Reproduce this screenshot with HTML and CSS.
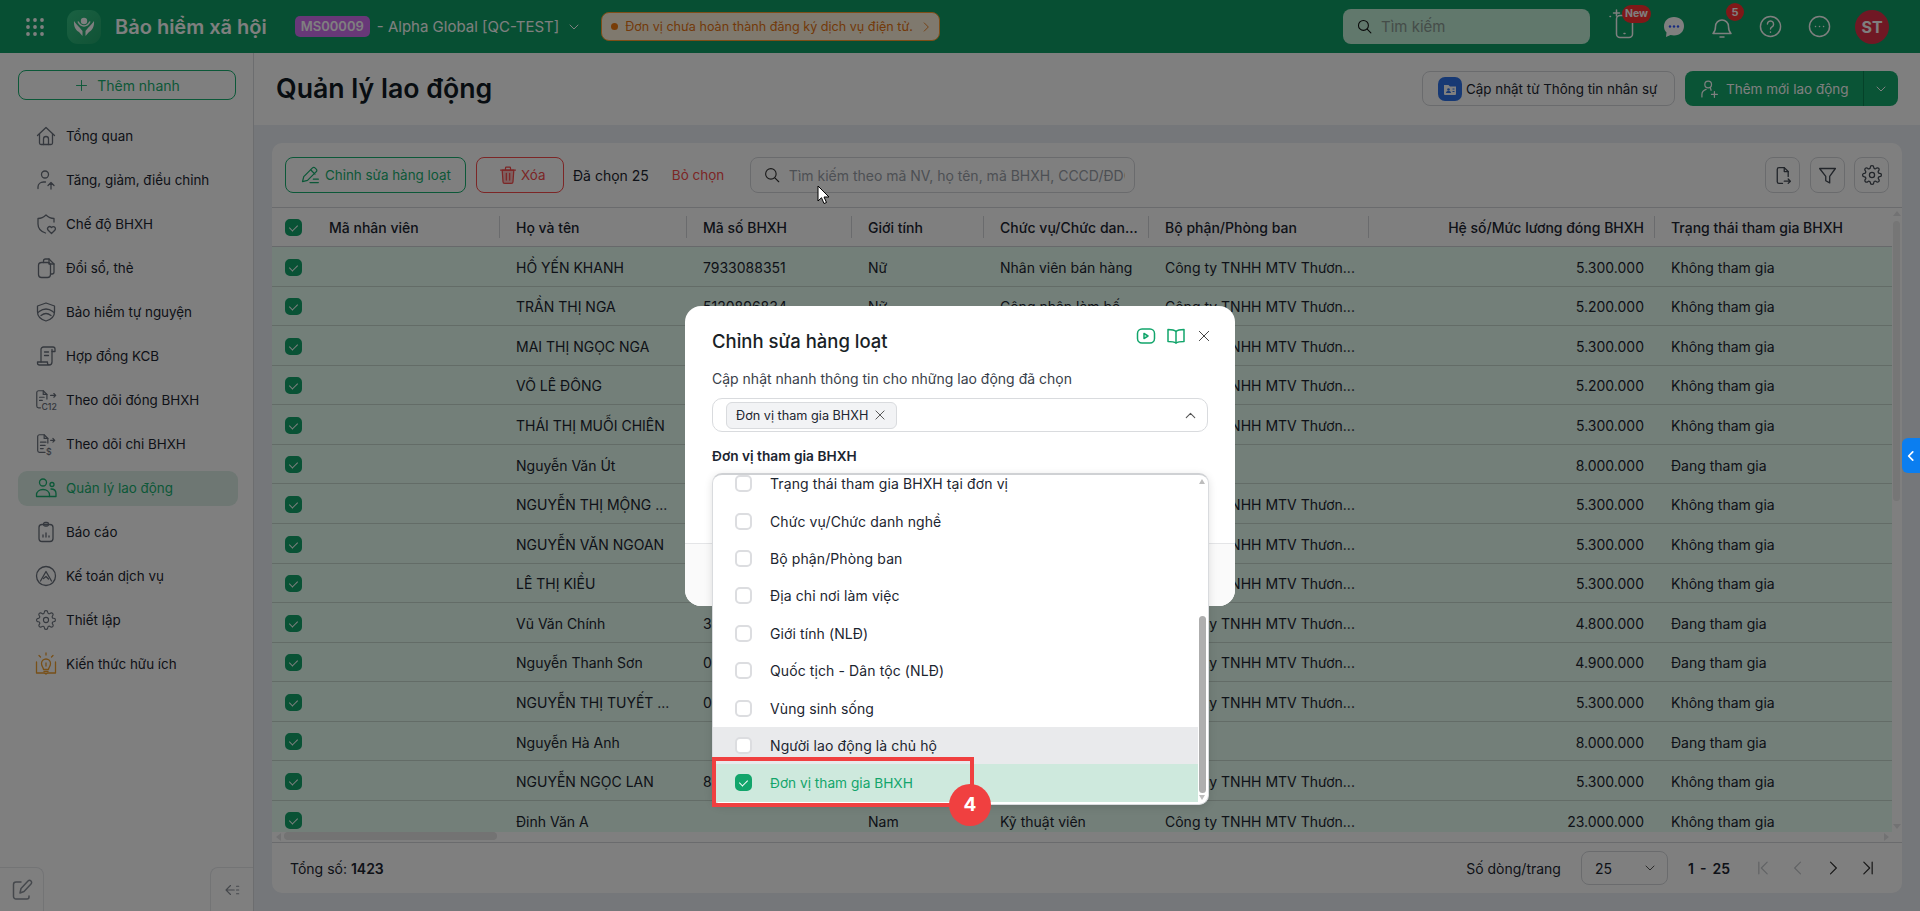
FILE: index.html
```html
<!DOCTYPE html>
<html lang="vi">
<head>
    <meta charset="UTF-8">
    <meta name="viewport" content="width=device-width, initial-scale=1.0">
    <title>Bảo hiểm xã hội - Quản lý lao động</title>
    <link rel="stylesheet" href="styles.css">
</head>
<body>
    <!-- icon sprite -->
    <svg class="sprite" xmlns="http://www.w3.org/2000/svg">
        <symbol id="i-home" viewBox="0 0 24 24"><path d="M3.5 11.5L12 3.5l8.500 8"/><path d="M5.500 10v9a1.500 1.500 0 0 0 1.500 1.500h10a1.500 1.500 0 0 0 1.500-1.500v-9"/><path d="M9.500 20.500V15a2.500 2.500 0 0 1 5 0v5.500"/></symbol>
        <symbol id="i-user-up" viewBox="0 0 24 24"><circle cx="11" cy="6.500" r="3.500"/><path d="M4 20.500v-1.500c0-3 2.500-5 5.500-5h2"/><path d="M17 21v-6.500M14 17.500l3-3 3 3"/></symbol>
        <symbol id="i-shield-heart" viewBox="0 0 24 24"><path d="M20 10V6.500c-3 0-5.500-1-8-3.500-2.500 2.500-5 3.500-8 3.500V12c0 4.500 3 7.500 7.500 9"/><path d="M17.500 21.500l-3.300-3.200a2.100 2.100 0 0 1 3-3l.3.300.3-.300a2.100 2.100 0 0 1 3 3z"/></symbol>
        <symbol id="i-docs" viewBox="0 0 24 24"><path d="M9.500 6.500V5a2 2 0 0 1 2-2h3.500l5 5v8a2 2 0 0 1-2 2h-1.500"/><path d="M15 3v5h5"/><rect x="4.500" y="6.500" width="12" height="15" rx="3"/></symbol>
        <symbol id="i-shield" viewBox="0 0 24 24"><path d="M12 3l8.500 3v6c0 4.500-3.500 7.500-8.500 9-5-1.500-8.500-4.500-8.500-9V6z"/><path d="M4 12.500c2-1 3-3.500 8-3.500s6 2.500 8 3.500"/><path d="M7 15.500c2-1.500 3-2 5-2s3 .5 5 2"/></symbol>
        <symbol id="i-scroll" viewBox="0 0 24 24"><path d="M7 18V5.500A2.500 2.500 0 0 1 9.500 3H19a2 2 0 0 1 2 2v2.500h-3"/><path d="M18 5.500V18a3 3 0 0 1-3 3H5.500a2 2 0 0 1-2-2v-1h10v1a2 2 0 0 0 2 2"/><path d="M10.500 8h4M10.500 11.500h4"/></symbol>
        <symbol id="i-c12" viewBox="0 0 26 24"><path d="M7 20.500H5a2 2 0 0 1-2-2V4a2 2 0 0 1 2-2h5l4 4v5"/><path d="M10 2v4h4M6 9h5M6 12.500h3M18 7h5.500M21.500 5l2 2-2 2"/><text x="8" y="23" class="ico-text">C12</text></symbol>
        <symbol id="i-dollar" viewBox="0 0 26 24"><path d="M12 21H6a2 2 0 0 1-2-2V4a2 2 0 0 1 2-2h5l4 4v5"/><path d="M11 2v4h4M7 10h6M7 13.500h5M7 17h3M18 8h4.500M20.500 6l2 2-2 2"/><text x="13" y="23.500" class="ico-text">$</text></symbol>
        <symbol id="i-users" viewBox="0 0 24 24"><circle cx="9" cy="6.500" r="3.500"/><circle cx="18" cy="8.500" r="2"/><path d="M2.500 20.500v-1.500c0-3.500 3-5.500 6.500-5.500s6.500 2 6.500 5.500v1.500z"/><path d="M17 13c3 0 5 1.500 5 4.500v3h-6.500"/></symbol>
        <symbol id="i-report" viewBox="0 0 24 24"><rect x="5" y="4.500" width="14" height="17" rx="3"/><rect x="9.500" y="2.500" width="5" height="3.500" rx="1.500"/><path d="M9 17v-2M12 17v-4M15 17v-1"/></symbol>
        <symbol id="i-accounting" viewBox="0 0 24 24"><circle cx="12" cy="12" r="9.500"/><path d="M6.500 17l5.500-9.500 5.500 9.500"/><path d="M9.500 14.500l2.500-2 2.500 2.500"/></symbol>
        <symbol id="i-gear" viewBox="-2 -2 28 28"><circle cx="12" cy="12" r="3"/><path d="M19.400 15a1.650 1.650 0 0 0 .33 1.820l.06.06a2 2 0 0 1 0 2.830 2 2 0 0 1-2.830 0l-.06-.06a1.650 1.650 0 0 0-1.820-.33 1.650 1.650 0 0 0-1 1.510V21a2 2 0 0 1-2 2 2 2 0 0 1-2-2v-.09A1.650 1.650 0 0 0 9 19.400a1.650 1.650 0 0 0-1.820.33l-.06.06a2 2 0 0 1-2.830 0 2 2 0 0 1 0-2.830l.06-.06a1.650 1.650 0 0 0 .33-1.820 1.650 1.650 0 0 0-1.510-1H3a2 2 0 0 1-2-2 2 2 0 0 1 2-2h.09A1.650 1.650 0 0 0 4.600 9a1.650 1.650 0 0 0-.33-1.820l-.06-.06a2 2 0 0 1 0-2.830 2 2 0 0 1 2.830 0l.06.06a1.650 1.650 0 0 0 1.820.33H9a1.650 1.650 0 0 0 1-1.510V3a2 2 0 0 1 2-2 2 2 0 0 1 2 2v.09a1.650 1.650 0 0 0 1 1.510 1.650 1.650 0 0 0 1.820-.33l.06-.06a2 2 0 0 1 2.830 0 2 2 0 0 1 0 2.830l-.06.06a1.650 1.650 0 0 0-.33 1.820V9a1.650 1.650 0 0 0 1.510 1H21a2 2 0 0 1 2 2 2 2 0 0 1-2 2h-.09a1.650 1.650 0 0 0-1.510 1z"/></symbol>
        <symbol id="i-idea" viewBox="0 0 24 24"><path d="M2.500 10v11h7.500c1 0 1.500.5 2 1 .5-.5 1-1 2-1h7.500V10"/><path d="M9.500 17.500c0-2-2-3-2-6a4.500 4.500 0 0 1 9 0c0 3-2 4-2 6z"/><path d="M12 1v2M5 3.500l1.500 1.500M19 3.500L17.500 5M12 11v3M10 19.500h4"/></symbol>
        <symbol id="i-search" viewBox="0 0 24 24"><circle cx="10.500" cy="10.500" r="7"/><path d="M15.800 15.800L21 21"/></symbol>
        <symbol id="i-chev-down" viewBox="0 0 24 24"><path d="M6 9l6 6 6-6"/></symbol>
        <symbol id="i-chev-up" viewBox="0 0 24 24"><path d="M6 15l6-6 6 6"/></symbol>
        <symbol id="i-chev-right" viewBox="0 0 24 24"><path d="M9 5l7 7-7 7"/></symbol>
        <symbol id="i-chev-left" viewBox="0 0 24 24"><path d="M15 5l-7 7 7 7"/></symbol>
        <symbol id="i-first" viewBox="0 0 24 24"><path d="M7 5v14M17 5l-7 7 7 7"/></symbol>
        <symbol id="i-last" viewBox="0 0 24 24"><path d="M17 5v14M7 5l7 7-7 7"/></symbol>
        <symbol id="i-close" viewBox="0 0 24 24"><path d="M5 5l14 14M19 5L5 19"/></symbol>
        <symbol id="i-plus" viewBox="0 0 24 24"><path d="M12 4v16M4 12h16"/></symbol>
    </svg>

    <!-- thanh trên cùng -->
    <header class="topbar">
        <svg class="apps" viewBox="0 0 18 18"><g>
            <circle cx="2" cy="2" r="1.900"/><circle cx="9" cy="2" r="1.900"/><circle cx="16" cy="2" r="1.900"/>
            <circle cx="2" cy="9" r="1.900"/><circle cx="9" cy="9" r="1.900"/><circle cx="16" cy="9" r="1.900"/>
            <circle cx="2" cy="16" r="1.900"/><circle cx="9" cy="16" r="1.900"/><circle cx="16" cy="16" r="1.900"/>
        </g></svg>
        <div class="logo">
            <svg viewBox="0 0 34 34"><circle cx="17" cy="11" r="3.200" fill="#fff"/><path d="M7 11c-.5 5 1.500 9 5 11l3.500 4v-5c-2-3-5-5-8.500-10z" fill="#fff"/><path d="M27 11c.5 5-1.500 9-5 11l-3.500 4v-5c2-3 5-5 8.500-10z" fill="#fff"/><path d="M11 11.500c1.500 3 3.500 4.500 6 4.500s4.500-1.500 6-4.500" fill="none" stroke="#fff" stroke-width="1.500"/></svg>
        </div>
        <div class="app-name">Bảo hiểm xã hội</div>
        <span class="org-code">MS00009</span>
        <span class="org-name">- Alpha Global [QC-TEST]</span>
        <svg class="ico org-chev"><use href="#i-chev-down"/></svg>
        <div class="notice">
            <span class="notice-dot"></span>
            <span>Đơn vị chưa hoàn thành đăng ký dịch vụ điện tử.</span>
            <svg class="ico notice-chev"><use href="#i-chev-right"/></svg>
        </div>
        <div class="top-search">
            <svg class="ico"><use href="#i-search"/></svg>
            <span>Tìm kiếm</span>
        </div>
        <div class="top-icons">
            <div class="top-icon phone">
                <svg viewBox="0 0 30 30" class="ico"><rect x="6.500" y="3.500" width="16" height="22" rx="3.500"/><path d="M14 21.500h1"/><path d="M6.500-2v6M3.500 1h6M0 4.500h.5"/></svg>
                <span class="badge badge-new">New</span>
            </div>
            <div class="top-icon chat">
                <svg viewBox="0 0 24 24"><path d="M12 2C6 2 2 6 2 11.500c0 2.500 1 4.500 2.500 6L4 22l4.500-2c1 .3 2.300.5 3.500.5 6 0 10-4 10-9.500S18 2 12 2z" fill="#fff"/><circle cx="8" cy="11.500" r="1.200" fill="#2f55ff"/><circle cx="12" cy="11.500" r="1.200" fill="#2f55ff"/><circle cx="16" cy="11.500" r="1.200" fill="#2f55ff"/></svg>
            </div>
            <div class="top-icon bell">
                <svg viewBox="0 0 24 24" class="ico"><path d="M3 18.500c1.500-1.500 2.500-3 2.500-7a6.500 6.500 0 0 1 13 0c0 4 1 5.500 2.500 7z"/><path d="M10 22h4"/></svg>
                <span class="badge badge-count">5</span>
            </div>
            <div class="top-icon help">
                <svg viewBox="0 0 24 24" class="ico"><circle cx="12" cy="12" r="10.500"/><path d="M8.800 9.500a3.200 3.200 0 1 1 4.800 2.800c-1 .6-1.600 1.200-1.600 2.400"/><path d="M12 17.800v.2"/></svg>
            </div>
            <div class="top-icon more">
                <svg viewBox="0 0 24 24" class="ico"><circle cx="12" cy="12" r="10.500"/><path d="M7.800 12h.1M12 12h.1M16.200 12h.1"/></svg>
            </div>
            <div class="avatar">ST</div>
        </div>
    </header>

    <div class="app">
        <aside class="sidebar">
            <button class="quick-add">
                <svg class="ico"><use href="#i-plus"/></svg>
                Thêm nhanh
            </button>
            <nav class="nav">
                <a class="nav-item"><svg class="ico"><use href="#i-home"/></svg>Tổng quan</a>
                <a class="nav-item"><svg class="ico"><use href="#i-user-up"/></svg>Tăng, giảm, điều chỉnh</a>
                <a class="nav-item"><svg class="ico"><use href="#i-shield-heart"/></svg>Chế độ BHXH</a>
                <a class="nav-item"><svg class="ico"><use href="#i-docs"/></svg>Đổi sổ, thẻ</a>
                <a class="nav-item"><svg class="ico"><use href="#i-shield"/></svg>Bảo hiểm tự nguyện</a>
                <a class="nav-item"><svg class="ico"><use href="#i-scroll"/></svg>Hợp đồng KCB</a>
                <a class="nav-item"><svg class="ico"><use href="#i-c12"/></svg>Theo dõi đóng BHXH</a>
                <a class="nav-item"><svg class="ico"><use href="#i-dollar"/></svg>Theo dõi chi BHXH</a>
                <a class="nav-item active"><svg class="ico"><use href="#i-users"/></svg>Quản lý lao động</a>
                <a class="nav-item"><svg class="ico"><use href="#i-report"/></svg>Báo cáo</a>
                <a class="nav-item"><svg class="ico"><use href="#i-accounting"/></svg>Kế toán dịch vụ</a>
                <a class="nav-item"><svg class="ico"><use href="#i-gear"/></svg>Thiết lập</a>
                <a class="nav-item nav-idea"><svg class="ico"><use href="#i-idea"/></svg>Kiến thức hữu ích</a>
            </nav>
            <div class="side-bottom">
                <div class="side-box edit-box">
                    <svg viewBox="0 0 24 24" class="ico"><path d="M11 4H6a2.500 2.500 0 0 0-2.500 2.500v12A2.500 2.500 0 0 0 6 21h11a2 2 0 0 0 2-2v-1"/><path d="M10 15l1-4.500L18 3a2 2 0 0 1 3 3l-7 7.500z"/></svg>
                </div>
                <div class="side-box collapse-box">
                    <svg viewBox="0 0 24 24" class="ico"><path d="M10 6l-6 6 6 6M4 12h11M18 7h3M18 12h3M18 17h3"/></svg>
                </div>
            </div>
        </aside>

        <main class="main">
            <div class="page-head">
                <h1>Quản lý lao động</h1>
                <div class="head-actions">
                    <button class="btn-sync">
                        <svg viewBox="0 0 24 24" class="sync-icon"><rect width="24" height="24" rx="7" fill="#2f73e8"/><path d="M6 8h4.500l1.500 1.500h6V17a1 1 0 0 1-1 1H7a1 1 0 0 1-1-1z" fill="#fff"/><circle cx="10.500" cy="12.500" r="1.300" fill="#2f73e8"/><path d="M8 16c0-1.500 1-2 2.500-2s2.500.5 2.500 2z" fill="#2f73e8"/><path d="M14.500 12h2M14.500 14.500h2" stroke="#2f73e8"/></svg>
                        Cập nhật từ Thông tin nhân sự
                    </button>
                    <div class="btn-add">
                        <span class="btn-add-main">
                            <svg viewBox="0 0 24 24" class="ico"><circle cx="11" cy="6.500" r="4"/><path d="M3.500 21.500v-3c0-3 2-5 5-6M15 18.500h7M18.500 15v7"/><path d="M13.500 10l1 3.500"/></svg>
                            Thêm mới lao động
                        </span>
                        <span class="btn-add-more"><svg class="ico"><use href="#i-chev-down"/></svg></span>
                    </div>
                </div>
            </div>

            <div class="content">
                <section class="card">
                    <div class="toolbar">
                        <button class="btn-outline btn-bulk">
                            <svg viewBox="0 0 24 24" class="ico"><path d="M3 20l1.500-6L15 3.500a2 2 0 0 1 3 0l1.500 1.500a2 2 0 0 1 0 3L9 18.500z"/><path d="M13 6l5 5M12 21h10M16 17h6"/></svg>
                            Chỉnh sửa hàng loạt
                        </button>
                        <button class="btn-outline btn-delete">
                            <svg viewBox="0 0 24 24" class="ico"><path d="M3 6h18M9 5V3.500A1 1 0 0 1 10 2.500h4a1 1 0 0 1 1 1V5"/><path d="M5 6l1 14a2 2 0 0 0 2 2h8a2 2 0 0 0 2-2l1-14z" fill="currentColor" fill-opacity=".35"/><path d="M10 10v8M14 10v8"/></svg>
                            Xóa
                        </button>
                        <span class="sel-count">Đã chọn 25</span>
                        <a class="sel-clear">Bỏ chọn</a>
                        <div class="tb-search">
                            <svg class="ico"><use href="#i-search"/></svg>
                            <span>Tìm kiếm theo mã NV, họ tên, mã BHXH, CCCD/ĐDCN</span>
                        </div>
                        <div class="tb-icons">
                            <button class="btn-icon"><svg viewBox="0 0 24 24" class="ico"><path d="M12 21H8a2 2 0 0 1-2-2V5a2 2 0 0 1 2-2h6l4.500 4.500V13"/><path d="M14 3v4.500h4.500M14 18.500h7M18.500 16l2.500 2.500-2.500 2.500"/></svg></button>
                            <button class="btn-icon"><svg viewBox="0 0 24 24" class="ico"><path d="M3 4h18l-6.500 9v7.500L10 18v-5z"/></svg></button>
                            <button class="btn-icon"><svg class="ico gear"><use href="#i-gear"/></svg></button>
                        </div>
                    </div>

                    <div class="table-wrap">
                        <div class="table-view">
                            <table class="grid">
                                <colgroup>
                                    <col class="c-check"><col class="c-code"><col class="c-name"><col class="c-bhxh"><col class="c-sex"><col class="c-job"><col class="c-dept"><col class="c-salary"><col class="c-state">
                                </colgroup>
                                <thead>
                                    <tr>
                                        <th class="no-line"><span class="check on"></span></th>
                                        <th>Mã nhân viên</th>
                                        <th>Họ và tên</th>
                                        <th>Mã số BHXH</th>
                                        <th>Giới tính</th>
                                        <th>Chức vụ/Chức dan...</th>
                                        <th>Bộ phận/Phòng ban</th>
                                        <th class="num">Hệ số/Mức lương đóng BHXH</th>
                                        <th class="no-line">Trạng thái tham gia BHXH</th>
                                    </tr>
                                </thead>
                                <tbody>
                                    <tr><td><span class="check on"></span></td><td></td><td>HỒ YẾN KHANH</td><td>7933088351</td><td>Nữ</td><td>Nhân viên bán hàng</td><td>Công ty TNHH MTV Thươn...</td><td class="num">5.300.000</td><td>Không tham gia</td></tr>
                                    <tr><td><span class="check on"></span></td><td></td><td>TRẦN THỊ NGA</td><td>5120896834</td><td>Nữ</td><td>Công nhân làm bế</td><td>Công ty TNHH MTV Thươn...</td><td class="num">5.200.000</td><td>Không tham gia</td></tr>
                                    <tr><td><span class="check on"></span></td><td></td><td>MAI THỊ NGỌC NGA</td><td></td><td></td><td></td><td>Công ty TNHH MTV Thươn...</td><td class="num">5.300.000</td><td>Không tham gia</td></tr>
                                    <tr><td><span class="check on"></span></td><td></td><td>VÕ LÊ ĐÔNG</td><td></td><td></td><td></td><td>Công ty TNHH MTV Thươn...</td><td class="num">5.200.000</td><td>Không tham gia</td></tr>
                                    <tr><td><span class="check on"></span></td><td></td><td>THÁI THỊ MUỖI CHIÊN</td><td></td><td></td><td></td><td>Công ty TNHH MTV Thươn...</td><td class="num">5.300.000</td><td>Không tham gia</td></tr>
                                    <tr><td><span class="check on"></span></td><td></td><td>Nguyễn Văn Út</td><td></td><td></td><td></td><td></td><td class="num">8.000.000</td><td>Đang tham gia</td></tr>
                                    <tr><td><span class="check on"></span></td><td></td><td>NGUYỄN THỊ MỘNG ...</td><td></td><td></td><td></td><td>Công ty TNHH MTV Thươn...</td><td class="num">5.300.000</td><td>Không tham gia</td></tr>
                                    <tr><td><span class="check on"></span></td><td></td><td>NGUYỄN VĂN NGOAN</td><td></td><td></td><td></td><td>Công ty TNHH MTV Thươn...</td><td class="num">5.300.000</td><td>Không tham gia</td></tr>
                                    <tr><td><span class="check on"></span></td><td></td><td>LÊ THỊ KIỀU</td><td></td><td></td><td></td><td>Công ty TNHH MTV Thươn...</td><td class="num">5.300.000</td><td>Không tham gia</td></tr>
                                    <tr><td><span class="check on"></span></td><td></td><td>Vũ Văn Chính</td><td>3</td><td></td><td></td><td>Công ty TNHH MTV Thươn...</td><td class="num">4.800.000</td><td>Đang tham gia</td></tr>
                                    <tr><td><span class="check on"></span></td><td></td><td>Nguyễn Thanh Sơn</td><td>0</td><td></td><td></td><td>Công ty TNHH MTV Thươn...</td><td class="num">4.900.000</td><td>Đang tham gia</td></tr>
                                    <tr><td><span class="check on"></span></td><td></td><td>NGUYỄN THỊ TUYẾT ...</td><td>0</td><td></td><td></td><td>Công ty TNHH MTV Thươn...</td><td class="num">5.300.000</td><td>Không tham gia</td></tr>
                                    <tr><td><span class="check on"></span></td><td></td><td>Nguyễn Hà Anh</td><td></td><td></td><td></td><td></td><td class="num">8.000.000</td><td>Đang tham gia</td></tr>
                                    <tr><td><span class="check on"></span></td><td></td><td>NGUYỄN NGỌC LAN</td><td>8</td><td></td><td></td><td>Công ty TNHH MTV Thươn...</td><td class="num">5.300.000</td><td>Không tham gia</td></tr>
                                    <tr><td><span class="check on"></span></td><td></td><td>Đinh Văn A</td><td></td><td>Nam</td><td>Kỹ thuật viên</td><td>Công ty TNHH MTV Thươn...</td><td class="num">23.000.000</td><td>Không tham gia</td></tr>
                                </tbody>
                            </table>
                        </div>
                        <div class="vbar"><span class="vbar-up"></span><span class="vbar-thumb"></span><span class="vbar-down"></span></div>
                        <div class="hbar"><span class="hbar-left"></span><span class="hbar-thumb"></span><span class="hbar-right"></span></div>
                    </div>

                    <div class="table-foot">
                        <div class="total">Tổng số: <b>1423</b></div>
                        <div class="pager">
                            <span class="pager-label">Số dòng/trang</span>
                            <div class="pager-size">25<svg class="ico"><use href="#i-chev-down"/></svg></div>
                            <b class="pager-range">1 - 25</b>
                            <svg class="ico pg dim"><use href="#i-first"/></svg>
                            <svg class="ico pg dim"><use href="#i-chev-left"/></svg>
                            <svg class="ico pg"><use href="#i-chev-right"/></svg>
                            <svg class="ico pg"><use href="#i-last"/></svg>
                        </div>
                    </div>
                </section>
            </div>
        </main>
    </div>

    <div class="mask"></div>

    <a class="side-handle"><svg class="ico"><use href="#i-chev-left"/></svg></a>

    <!-- popup chỉnh sửa -->
    <div class="modal">
        <div class="modal-head">
            <h2>Chỉnh sửa hàng loạt</h2>
            <div class="modal-tools">
                <svg viewBox="0 0 20 20" class="ico tool-green"><rect x="1.500" y="3" width="17" height="14" rx="4.500"/><path d="M8 7.500v5l4-2.500z"/></svg>
                <svg viewBox="0 0 20 20" class="ico tool-green"><path d="M10 5.500C8.500 4 6 3.500 2 3.500v12c4 0 6.500.5 8 1.500 1.500-1 4-1.500 8-1.500v-12c-4 0-6.500.5-8 2z"/><path d="M10 5.500V17"/></svg>
                <svg class="ico tool-close"><use href="#i-close"/></svg>
            </div>
        </div>
        <p class="modal-sub">Cập nhật nhanh thông tin cho những lao động đã chọn</p>
        <div class="multi-select">
            <span class="tag">Đơn vị tham gia BHXH<svg class="ico"><use href="#i-close"/></svg></span>
            <svg class="ico multi-chev"><use href="#i-chev-up"/></svg>
        </div>
        <div class="field-label">Đơn vị tham gia BHXH</div>
        <div class="modal-foot"></div>

        <div class="dropdown">
            <ul class="options">
                <li><span class="check"></span>Trạng thái tham gia BHXH tại đơn vị</li>
                <li><span class="check"></span>Chức vụ/Chức danh nghề</li>
                <li><span class="check"></span>Bộ phận/Phòng ban</li>
                <li><span class="check"></span>Địa chỉ nơi làm việc</li>
                <li><span class="check"></span>Giới tính (NLĐ)</li>
                <li><span class="check"></span>Quốc tịch - Dân tộc (NLĐ)</li>
                <li><span class="check"></span>Vùng sinh sống</li>
                <li class="hover"><span class="check"></span>Người lao động là chủ hộ</li>
                <li class="picked"><span class="check on"></span>Đơn vị tham gia BHXH</li>
            </ul>
            <div class="drop-bar"><span class="drop-up"></span><span class="drop-thumb"></span><span class="drop-down"></span></div>
        </div>
    </div>

    <!-- khung chú thích bước 4 -->
    <div class="callout"></div>
    <div class="step">4</div>

    <svg class="cursor" viewBox="0 0 14 20"><path d="M1 1v15l3.500-3.300L7 18.500l2.500-1-2.500-5.500h5z" fill="#fff" stroke="#000" stroke-width="1"/></svg>
</body>
</html>
```

FILE: styles.css
```css
* {
    margin: 0;
    padding: 0;
    box-sizing: border-box;
}

body {
    height: 100vh;
    overflow: hidden;
    display: flex;
    flex-direction: column;
    position: relative;
    background: #eaeef4;
    color: #1c2530;
    font-family: Inter, 'Noto Sans', sans-serif;
    font-size: 14px;
}

button {
    font-family: inherit;
    font-size: 14px;
    background: none;
    cursor: pointer;
}

.sprite {
    display: none;
}

.ico {
    fill: none;
    stroke: currentColor;
    stroke-width: 1.5;
    stroke-linecap: round;
    stroke-linejoin: round;
    flex-shrink: 0;
}

.ico-text {
    font-family: Inter, sans-serif;
    font-size: 9.500px;
    font-weight: 500;
    stroke: none;
    fill: currentColor;
}

/* Topbar */
.topbar {
    height: 53px;
    flex-shrink: 0;
    display: flex;
    align-items: center;
    padding-left: 26px;
    background: #0e9f66;
    color: #fff;
}

.apps {
    width: 18px;
    height: 18px;
    fill: #fff;
}

.logo {
    width: 34px;
    height: 34px;
    margin-left: 23px;
    border-radius: 11px;
    background: linear-gradient(135deg, #35c385, #21a56b);
}

.logo svg {
    display: block;
}

.app-name {
    margin-left: 14px;
    font-size: 20px;
    font-weight: 600;
    white-space: nowrap;
}

.org-code {
    margin-left: 28px;
    width: 75px;
    height: 21px;
    line-height: 21px;
    text-align: center;
    border-radius: 5px;
    background: #d070f0;
    font-size: 13px;
    font-weight: 600;
}

.org-name {
    margin-left: 7px;
    font-size: 15px;
    white-space: nowrap;
}

.org-chev {
    width: 16px;
    height: 16px;
    margin-left: 7px;
}

.notice {
    display: flex;
    align-items: center;
    margin-left: 19px;
    height: 29px;
    width: 339px;
    padding-left: 9px;
    border: 1px solid #ff9d2e;
    border-radius: 8px;
    background: #fff3dc;
    color: #e67412;
    font-size: 12.600px;
    white-space: nowrap;
}

.notice-dot {
    width: 7px;
    height: 7px;
    margin-right: 7px;
    border-radius: 50%;
    background: #f07a10;
}

.notice-chev {
    width: 14px;
    height: 14px;
    margin-left: 6px;
}

.top-search {
    display: flex;
    align-items: center;
    gap: 8px;
    width: 247px;
    height: 35px;
    margin-left: auto;
    margin-right: 20px;
    padding-left: 13px;
    border-radius: 8px;
    background: #c2f0d8;
    color: #8b9a93;
    font-size: 15px;
}

.top-search .ico {
    width: 17px;
    height: 17px;
    color: #111;
}

.top-icons {
    display: flex;
    align-items: center;
    padding-right: 31px;
}

.top-icon {
    position: relative;
    display: flex;
    align-items: center;
    justify-content: center;
}

.top-icon svg {
    display: block;
    overflow: visible;
}

.phone {
    width: 30px;
}

.phone svg {
    width: 30px;
    height: 30px;
}

.chat {
    margin-left: 22px;
}

.chat svg {
    width: 24px;
    height: 24px;
}

.bell {
    margin-left: 24px;
}

.bell svg {
    width: 24px;
    height: 24px;
}

.help {
    margin-left: 25px;
}

.help svg,
.more svg {
    width: 23px;
    height: 23px;
}

.more {
    margin-left: 26px;
}

.badge {
    position: absolute;
    display: block;
    background: #ff3030;
    color: #fff;
    font-weight: 700;
    text-align: center;
    border-radius: 9px;
    height: 18px;
    line-height: 18px;
}

.badge-new {
    left: 12px;
    top: -7px;
    width: 29px;
    font-size: 10.500px;
}

.badge-count {
    left: 16px;
    top: -12px;
    width: 18px;
    font-size: 11px;
}

.avatar {
    width: 34px;
    height: 34px;
    margin-left: 24px;
    border-radius: 50%;
    background: #e03048;
    line-height: 34px;
    text-align: center;
    font-size: 16px;
    font-weight: 700;
}

/* Layout */
.app {
    flex: 1;
    min-height: 0;
    display: flex;
}

.sidebar {
    width: 254px;
    flex-shrink: 0;
    display: flex;
    flex-direction: column;
    background: #fff;
    border-right: 1px solid #d8dade;
}

.quick-add {
    display: flex;
    align-items: center;
    justify-content: center;
    gap: 8px;
    width: 218px;
    height: 30px;
    margin: 17px 0 0 18px;
    border: 1px solid #18b070;
    border-radius: 8px;
    color: #18b070;
}

.quick-add .ico {
    width: 15px;
    height: 15px;
}

.nav {
    display: flex;
    flex-direction: column;
    gap: 9px;
    margin-top: 19px;
}

.nav-item {
    display: flex;
    align-items: center;
    gap: 8px;
    width: 220px;
    height: 35px;
    margin-left: 18px;
    padding: 0 0 2px 16px;
    border-radius: 9px;
    font-size: 13.400px;
    white-space: nowrap;
    color: #1c2530;
}

.nav-item .ico {
    width: 24px;
    height: 24px;
    margin-top: 1px;
    color: #6a717c;
    stroke-width: 1.300;
}

.nav-item.active {
    background: #dcefe6;
    color: #18b070;
}

.nav-item.active .ico {
    color: #18b070;
}

.nav-idea .ico {
    color: #f0a030;
}

.side-bottom {
    margin-top: auto;
    height: 44px;
    display: flex;
    justify-content: space-between;
}

.side-box {
    display: flex;
    align-items: center;
    justify-content: center;
    height: 44px;
    border-top: 1px solid #e6e8eb;
    color: #8a9099;
}

.edit-box {
    width: 44px;
    border-right: 1px solid #e6e8eb;
    border-top-right-radius: 8px;
}

.edit-box svg {
    width: 24px;
    height: 24px;
}

.collapse-box {
    width: 43px;
    border-left: 1px solid #e6e8eb;
    border-top-left-radius: 8px;
}

.collapse-box svg {
    width: 18px;
    height: 18px;
}

.main {
    flex: 1;
    min-width: 0;
    display: flex;
    flex-direction: column;
}

.page-head {
    height: 72px;
    flex-shrink: 0;
    display: flex;
    align-items: center;
    justify-content: space-between;
    padding: 0 22px;
    background: #fff;
}

.page-head h1 {
    margin-bottom: 2px;
    font-size: 26.700px;
    font-weight: 600;
    color: #111a24;
}

.head-actions {
    display: flex;
    gap: 10px;
    margin-top: -1px;
}

.btn-sync {
    display: flex;
    align-items: center;
    gap: 4px;
    width: 253px;
    height: 35px;
    padding-left: 15px;
    border: 1px solid #d5d7db;
    border-radius: 8px;
    font-size: 13.400px;
    color: #1c2530;
    white-space: nowrap;
}

.sync-icon {
    width: 24px;
    height: 24px;
    flex-shrink: 0;
}

.btn-add {
    display: flex;
    width: 213px;
    height: 35px;
    border-radius: 8px;
    background: #14a86c;
    color: #fff;
    font-size: 13.500px;
}

.btn-add-main {
    display: flex;
    align-items: center;
    gap: 7px;
    width: 178px;
    padding-left: 14px;
    white-space: nowrap;
}

.btn-add-main .ico {
    width: 20px;
    height: 20px;
}

.btn-add-more {
    flex: 1;
    display: flex;
    align-items: center;
    justify-content: center;
    border-left: 1px solid #0b8452;
}

.btn-add-more .ico {
    width: 16px;
    height: 16px;
}

.content {
    flex: 1;
    min-height: 0;
    padding: 18px;
}

.card {
    height: 100%;
    display: flex;
    flex-direction: column;
    border-radius: 10px;
    background: #fff;
    overflow: hidden;
}

/* Toolbar */
.toolbar {
    height: 65px;
    flex-shrink: 0;
    display: flex;
    align-items: center;
    padding: 0 13px;
    border-bottom: 1px solid #d5d7db;
}

.btn-outline {
    display: flex;
    align-items: center;
    height: 36px;
    border-radius: 8px;
    font-size: 13.400px;
    white-space: nowrap;
}

.btn-bulk {
    gap: 5px;
    width: 181px;
    padding-left: 14px;
    border: 1px solid #18b070;
    color: #18b070;
}

.btn-bulk .ico {
    width: 20px;
    height: 20px;
}

.btn-delete {
    gap: 3px;
    width: 88px;
    margin-left: 10px;
    padding-left: 21px;
    border: 1px solid #f84c4c;
    color: #f84c4c;
}

.btn-delete .ico {
    width: 20px;
    height: 20px;
}

.sel-count {
    margin-left: 9px;
}

.sel-clear {
    margin-left: 23px;
    font-size: 13.500px;
    color: #f84c4c;
}

.tb-search {
    display: flex;
    align-items: center;
    gap: 8px;
    width: 385px;
    height: 36px;
    margin-left: 25.500px;
    padding: 0 9px 0 12px;
    border: 1px solid #d5d7db;
    border-radius: 8px;
    color: #9aa0a8;
    overflow: hidden;
    white-space: nowrap;
}

.tb-search .ico {
    width: 18px;
    height: 18px;
    color: #333;
}

.tb-search span {
    overflow: hidden;
}

.tb-icons {
    display: flex;
    gap: 9.500px;
    margin-left: auto;
}

.btn-icon {
    display: flex;
    align-items: center;
    justify-content: center;
    width: 35px;
    height: 36px;
    border: 1px solid #d5d7db;
    border-radius: 8px;
    color: #444b55;
}

.btn-icon .ico {
    width: 21px;
    height: 21px;
}

.btn-icon .gear {
    width: 24px;
    height: 24px;
}

/* Table */
.table-wrap {
    flex: 1;
    min-height: 0;
    display: grid;
    grid-template-columns: 1fr 10px;
    grid-template-rows: 1fr 10px;
}

.table-view {
    overflow: hidden;
    min-height: 0;
}

.grid {
    width: 1620px;
    table-layout: fixed;
    border-collapse: separate;
    border-spacing: 0;
}

.c-check { width: 41px; }
.c-code { width: 187px; }
.c-name { width: 187px; }
.c-bhxh { width: 165px; }
.c-sex { width: 132px; }
.c-job { width: 165px; }
.c-dept { width: 220px; }
.c-salary { width: 286px; }
.c-state { width: 237px; }

.grid th,
.grid td {
    padding: 0 11px 0 16px;
    text-align: left;
    white-space: nowrap;
    overflow: hidden;
}

.grid th {
    position: relative;
    height: 39px;
    font-weight: 500;
    border-bottom: 1px solid #cfd2d6;
}

.grid th::after {
    content: '';
    position: absolute;
    top: 8px;
    bottom: 8px;
    right: 0;
    width: 1px;
    background: #d5d7db;
}

.grid th.no-line::after {
    display: none;
}

.grid td {
    height: 39.570px;
    padding-top: 2px;
    background: #e6fef2;
    border-bottom: 1px solid #c6d9cf;
}

.grid th:first-child,
.grid td:first-child {
    padding: 0 0 0 13px;
}

.grid .num {
    text-align: right;
}

.check {
    display: inline-block;
    position: relative;
    width: 17px;
    height: 17px;
    border: 2px solid #dcdde0;
    border-radius: 5px;
    background: #fff;
    vertical-align: middle;
}

.check.on {
    border-color: #12a56b;
    background: #12a56b;
}

.check.on::after {
    content: '';
    position: absolute;
    left: 4px;
    top: 2px;
    width: 4px;
    height: 7px;
    border: solid #fff;
    border-width: 0 1.500px 1.500px 0;
    transform: rotate(45deg);
}

.vbar {
    position: relative;
    background: #fff;
}

.vbar-up,
.vbar-down {
    position: absolute;
    left: 1px;
    width: 0;
    height: 0;
    border-left: 4px solid transparent;
    border-right: 4px solid transparent;
}

.vbar-up {
    top: 3px;
    border-bottom: 5px solid #e4e5e7;
}

.vbar-down {
    bottom: 3px;
    border-top: 5px solid #e4e5e7;
}

.vbar-thumb {
    position: absolute;
    left: 1px;
    top: 13px;
    width: 7px;
    height: 280px;
    border-radius: 4px;
    background: #ececec;
}

.hbar {
    grid-column: 1 / -1;
    position: relative;
    background: #fff;
}

.hbar-left,
.hbar-right {
    position: absolute;
    top: 1px;
    width: 0;
    height: 0;
    border-top: 4px solid transparent;
    border-bottom: 4px solid transparent;
}

.hbar-left {
    left: 4px;
    border-right: 5px solid #e4e5e7;
}

.hbar-right {
    right: 13px;
    border-left: 5px solid #e4e5e7;
}

.hbar-thumb {
    position: absolute;
    left: 12px;
    top: 0;
    width: 213px;
    height: 8px;
    border-radius: 4px;
    background: #e6e6e6;
}

.table-foot {
    height: 51px;
    flex-shrink: 0;
    display: flex;
    align-items: center;
    justify-content: space-between;
    padding: 0 24px 0 18px;
    border-top: 1px solid #d5d7db;
}

.total b,
.pager-range {
    font-weight: 600;
}

.pager {
    display: flex;
    align-items: center;
}

.pager-size {
    display: flex;
    align-items: center;
    justify-content: space-between;
    width: 87px;
    height: 34px;
    margin: 0 20px 0 20px;
    padding: 0 9px 0 13px;
    border: 1px solid #d5d7db;
    border-radius: 8px;
}

.pager-size .ico {
    width: 16px;
    height: 16px;
    color: #555;
}

.pager-range {
    margin-right: 23px;
    word-spacing: 2.500px;
}

.pg {
    width: 20px;
    height: 20px;
    margin-left: 15px;
    color: #333;
}

.pg:first-of-type {
    margin-left: 0;
}

.pg.dim {
    color: #c4c7cb;
}

/* Mask + overlays */
.mask {
    position: absolute;
    inset: 0;
    z-index: 10;
    background: rgba(0, 0, 0, 0.5);
}

.side-handle {
    position: absolute;
    right: 0;
    top: 438px;
    z-index: 11;
    width: 18px;
    height: 35px;
    display: flex;
    align-items: center;
    justify-content: center;
    border-radius: 6px 0 0 6px;
    background: #0b7ef0;
    color: #fff;
}

.side-handle .ico {
    width: 14px;
    height: 14px;
    stroke-width: 3;
}

.modal {
    position: absolute;
    left: 685px;
    top: 306px;
    z-index: 20;
    width: 550px;
    height: 300px;
    display: flex;
    flex-direction: column;
    padding: 20px 27px 0;
    border-radius: 16px;
    background: #fff;
}

.modal-head {
    display: flex;
    justify-content: space-between;
}

.modal-head h2 {
    font-size: 18.500px;
    line-height: 30px;
    font-weight: 500;
    color: #1a1f26;
}

.modal-tools {
    display: flex;
    gap: 10px;
    height: 20px;
    margin-right: -4px;
    align-items: center;
}

.modal-tools svg {
    width: 20px;
    height: 20px;
}

.tool-green {
    color: #12a56b;
}

.modal-tools .tool-close {
    width: 16px;
    height: 16px;
    color: #444;
}

.modal-sub {
    margin-top: 13px;
    line-height: 20px;
    color: #3a414a;
}

.multi-select {
    display: flex;
    align-items: center;
    justify-content: space-between;
    height: 34px;
    margin-top: 9px;
    padding: 0 8px 0 13px;
    border: 1px solid #d9dbde;
    border-radius: 10px;
}

.tag {
    display: flex;
    align-items: center;
    justify-content: space-between;
    width: 171px;
    height: 27px;
    padding: 0 9px;
    border: 1px solid #d9dbde;
    border-radius: 6px;
    background: #f2f3f5;
    font-size: 12.700px;
    white-space: nowrap;
}

.tag .ico {
    width: 14px;
    height: 14px;
    color: #444;
}

.multi-chev {
    width: 17px;
    height: 17px;
    color: #555;
}

.field-label {
    margin-top: 14px;
    line-height: 20px;
    font-size: 13.700px;
    font-weight: 600;
}

.modal-foot {
    position: absolute;
    left: 0;
    right: 0;
    bottom: 0;
    height: 63px;
    border-top: 1px solid #e4e5e7;
    border-radius: 0 0 16px 16px;
    background: #fafafa;
}

.dropdown {
    position: absolute;
    left: 27px;
    top: 167px;
    width: 497px;
    height: 332px;
    display: flex;
    padding-bottom: 4px;
    border: 1px solid #d9dbde;
    border-top: 2px solid #cfd1d4;
    border-radius: 10px;
    background: #fff;
    overflow: hidden;
    box-shadow: 0 2px 8px rgba(0, 0, 0, 0.12);
}

.options {
    flex: 1;
    list-style: none;
    margin-top: -10px;
}

.options li {
    display: flex;
    align-items: center;
    gap: 18px;
    height: 37.400px;
    padding-left: 22px;
    letter-spacing: 0.1px;
    white-space: nowrap;
}

.options .hover {
    background: #e9eaec;
}

.options .picked {
    background: #cee9dd;
    color: #12a56b;
    font-size: 13.700px;
    letter-spacing: 0;
}

.drop-bar {
    position: relative;
    width: 10px;
}

.drop-thumb {
    position: absolute;
    left: 1px;
    top: 141px;
    width: 7px;
    height: 177px;
    border-radius: 4px;
    background: #aeaeae;
}

.drop-up,
.drop-down {
    position: absolute;
    left: 1px;
    width: 0;
    height: 0;
    border-left: 3.500px solid transparent;
    border-right: 3.500px solid transparent;
}

.drop-up {
    top: 4px;
    border-bottom: 5px solid #bdbdbd;
}

.drop-down {
    bottom: 0;
    border-top: 5px solid #bdbdbd;
}

.callout {
    position: absolute;
    left: 712px;
    top: 757px;
    z-index: 30;
    width: 262px;
    height: 50px;
    border: 4px solid #f04040;
}

.step {
    position: absolute;
    left: 949px;
    top: 784px;
    z-index: 31;
    width: 42px;
    height: 42px;
    border-radius: 50%;
    background: #f04040;
    color: #fff;
    font-size: 19px;
    font-weight: 700;
    line-height: 42px;
    text-align: center;
}

.cursor {
    position: absolute;
    left: 817px;
    top: 185px;
    z-index: 40;
    width: 14px;
    height: 20px;
}
```
